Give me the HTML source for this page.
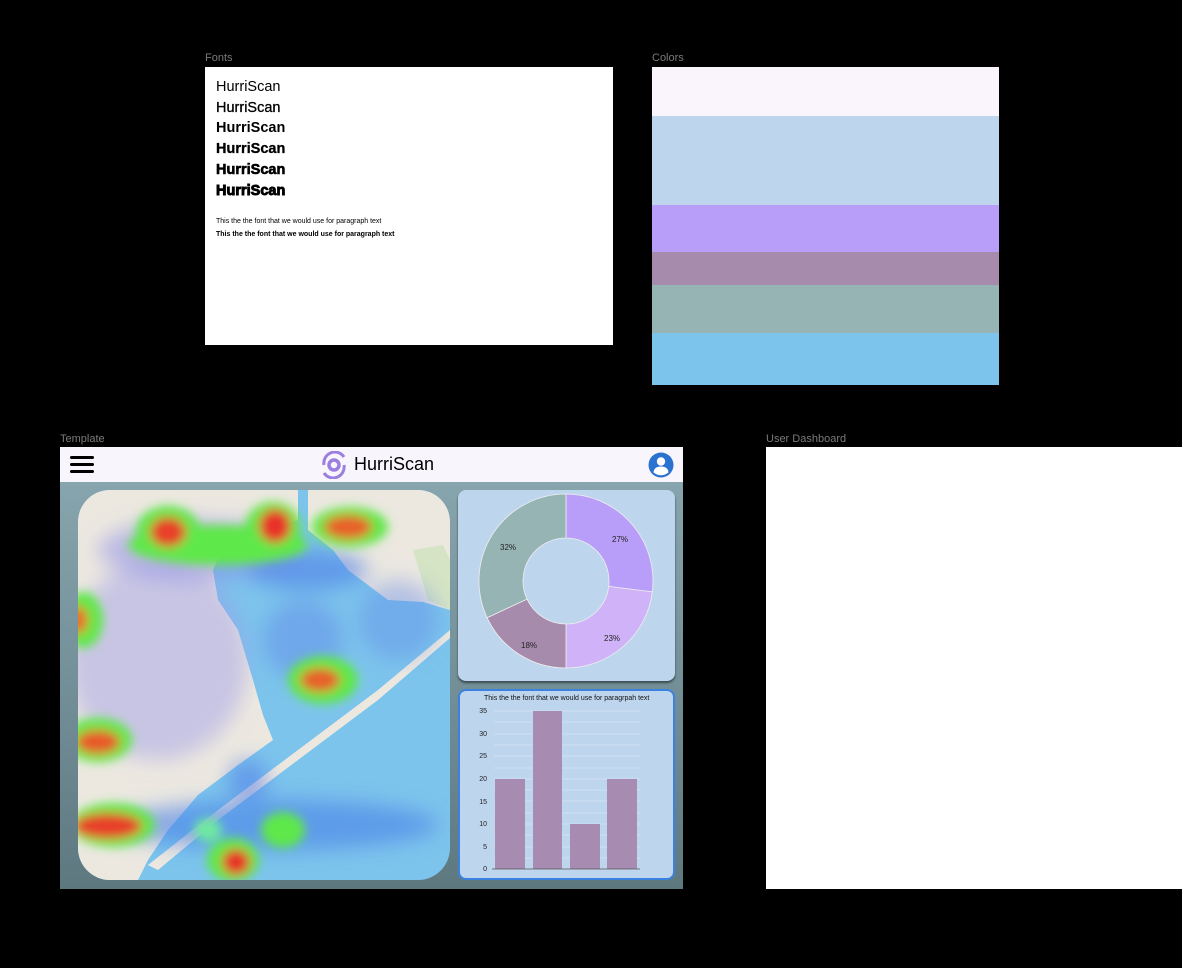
<!DOCTYPE html>
<html><head><style>
body{margin:0;width:1182px;height:968px;background:#000;position:relative;overflow:hidden;font-family:"Liberation Sans",sans-serif}
.lbl{position:absolute;color:#7a7a7a;font-size:11px}
.abs{position:absolute}
</style></head><body>
<div class="lbl" style="left:205px;top:52px">Fonts</div>
<div class="lbl" style="left:652px;top:52px">Colors</div>
<div class="lbl" style="left:60px;top:433px">Template</div>
<div class="lbl" style="left:766px;top:433px">User Dashboard</div>

<div class="abs" style="left:205px;top:67px;width:408px;height:278px;background:#fff">
 <div style="position:absolute;left:11px;top:10px;font-size:14.5px;line-height:20.7px;color:#000">
  <div style="font-weight:400">HurriScan</div>
  <div style="font-weight:400;-webkit-text-stroke:.3px #000">HurriScan</div>
  <div style="font-weight:700">HurriScan</div>
  <div style="font-weight:700;-webkit-text-stroke:.3px #000">HurriScan</div>
  <div style="font-weight:700;-webkit-text-stroke:.6px #000">HurriScan</div>
  <div style="font-weight:700;-webkit-text-stroke:.9px #000">HurriScan</div>
 </div>
 <div style="position:absolute;left:11px;top:148px;font-size:7px;line-height:13px">This the the font that we would use for paragraph text<br><b>This the the font that we would use for paragraph text</b></div>
</div>

<div class="abs" style="left:652px;top:67px;width:347px;height:318px">
 <div style="height:49px;background:#faf5fd"></div>
 <div style="height:89px;background:#bed5ee"></div>
 <div style="height:47px;background:#b89ef8"></div>
 <div style="height:33px;background:#a78bac"></div>
 <div style="height:48px;background:#96b4b4"></div>
 <div style="height:52px;background:#7cc4ec"></div>
</div>

<div class="abs" style="left:766px;top:447px;width:416px;height:442px;background:#fff"></div>

<div class="abs" style="left:60px;top:447px;width:623px;height:442px;background:linear-gradient(#8ba9b2,#5e7880)">
 <div style="height:35px;background:#f9f5fd;position:relative">
  <div style="position:absolute;left:10px;top:9px;width:24px">
   <div style="height:3px;background:#000;border-radius:2px;margin-bottom:4px"></div>
   <div style="height:3px;background:#000;border-radius:2px;margin-bottom:4px"></div>
   <div style="height:3px;background:#000;border-radius:2px"></div>
  </div>
  <svg style="position:absolute;left:260px;top:4px" width="28" height="28" viewBox="0 0 28 28">
   <circle cx="14" cy="14" r="5" fill="none" stroke="#9b7fe0" stroke-width="3.5"/>
   <path d="M4 22 A11 11 0 0 0 24 14" fill="none" stroke="#9b7fe0" stroke-width="3"/>
   <path d="M24 6 A11 11 0 0 0 4 14" fill="none" stroke="#9b7fe0" stroke-width="3"/>
  </svg>
  <div style="position:absolute;left:294px;top:7px;font-size:18px;color:#000">HurriScan</div>
  <svg style="position:absolute;left:588px;top:5px" width="26" height="26" viewBox="0 0 26 26">
   <circle cx="13" cy="13" r="12.5" fill="#2a72d0"/>
   <circle cx="13" cy="9.5" r="4.2" fill="#fff"/>
   <path d="M5.5 20.5 Q6 14.5 13 14.5 Q20 14.5 20.5 20.5 Q13 26 5.5 20.5Z" fill="#fff"/>
  </svg>
 </div>
 <svg style="position:absolute;left:18px;top:43px" width="372" height="390" viewBox="0 0 372 390">
  <defs>
   <clipPath id="c"><rect width="372" height="390" rx="32"/></clipPath>
   <filter id="b"><feGaussianBlur stdDeviation="10"/></filter>
   <filter id="b2"><feGaussianBlur stdDeviation="5"/></filter>
  </defs>
  <g clip-path="url(#c)">
   <rect width="372" height="390" fill="#7cc4ec"/>
   <path d="M0 0H220V30L190 40 150 45 135 80 140 110 160 140 175 190 185 225 195 250 160 275 120 305 90 340 70 370 60 390H0Z" fill="#ece8e0"/>
   <path d="M230 0H372V120L345 112 310 110 270 80 255 60 230 40Z" fill="#ece8e0"/>
   <path d="M70 375 L140 320 L220 260 L300 200 L372 140 L372 148 L300 210 L220 270 L140 330 L80 380Z" fill="#ece8e0"/>
   <path d="M335 60L365 55 372 70 372 120 350 110Z" fill="#d4e4c4"/>
   <g filter="url(#b)">
    <ellipse cx="80" cy="170" rx="90" ry="100" fill="#9b9ae8" opacity=".45"/>
    <ellipse cx="120" cy="60" rx="100" ry="30" fill="#8a8ae8" opacity=".5"/>
    <ellipse cx="230" cy="80" rx="60" ry="20" fill="#4f7ee8" opacity=".6"/>
    <ellipse cx="225" cy="150" rx="40" ry="40" fill="#5f86e8" opacity=".45"/>
    <ellipse cx="320" cy="130" rx="40" ry="40" fill="#5f86e8" opacity=".4"/>
    <ellipse cx="200" cy="335" rx="160" ry="25" fill="#4a80e8" opacity=".6"/>
    <ellipse cx="170" cy="290" rx="20" ry="20" fill="#4a70e8" opacity=".5"/>
   </g>
   <g filter="url(#b2)">
    <ellipse cx="140" cy="55" rx="90" ry="20" fill="#5ee84a"/>
    <ellipse cx="90" cy="42" rx="32" ry="26" fill="#5ee84a"/>
    <ellipse cx="195" cy="38" rx="28" ry="26" fill="#5ee84a"/>
    <ellipse cx="272" cy="37" rx="38" ry="20" fill="#5ee84a"/>
    <ellipse cx="245" cy="190" rx="35" ry="24" fill="#5ee84a"/>
    <ellipse cx="5" cy="130" rx="20" ry="28" fill="#5ee84a"/>
    <ellipse cx="20" cy="250" rx="34" ry="22" fill="#5ee84a"/>
    <ellipse cx="35" cy="335" rx="42" ry="22" fill="#5ee84a"/>
    <ellipse cx="155" cy="370" rx="26" ry="22" fill="#5ee84a"/>
    <ellipse cx="130" cy="340" rx="14" ry="12" fill="#6ee8a0"/>
    <ellipse cx="205" cy="340" rx="22" ry="18" fill="#5ee84a"/>
    <ellipse cx="90" cy="42" rx="18" ry="15" fill="#e8402a"/>
    <ellipse cx="197" cy="36" rx="16" ry="17" fill="#e8322a"/>
    <ellipse cx="270" cy="37" rx="24" ry="12" fill="#e8602a"/>
    <ellipse cx="242" cy="190" rx="20" ry="12" fill="#e8602a"/>
    <ellipse cx="0" cy="130" rx="10" ry="14" fill="#e8702a"/>
    <ellipse cx="20" cy="252" rx="22" ry="12" fill="#e85a2a"/>
    <ellipse cx="30" cy="336" rx="34" ry="13" fill="#e8402a"/>
    <ellipse cx="158" cy="372" rx="14" ry="13" fill="#e8322a"/>
   </g>
  </g>
 </svg>
 <div style="position:absolute;left:398px;top:43px;width:217px;height:191px;background:#bed5ee;border-radius:8px;box-shadow:0 2px 2px #3a4a50">
  <svg width="217" height="191" viewBox="0 0 217 191">
   <g transform="translate(108,91)" stroke="#eee" stroke-width=".8">
    <path d="M0 -87 A87 87 0 0 1 86.3 10.9 L42.7 5.4 A43 43 0 0 0 0 -43Z" fill="#b89ef8"/>
    <path d="M86.3 10.9 A87 87 0 0 1 0 87 L0 43 A43 43 0 0 0 42.7 5.4Z" fill="#d0b2f8"/>
    <path d="M0 87 A87 87 0 0 1 -78.9 36.7 L-39 18.1 A43 43 0 0 0 0 43Z" fill="#a78bac"/>
    <path d="M-78.9 36.7 A87 87 0 0 1 0 -87 L0 -43 A43 43 0 0 0 -39 18.1Z" fill="#96b4b4"/>
   </g>
   <g font-size="8" fill="#222"><text x="154" y="52">27%</text><text x="146" y="151">23%</text><text x="63" y="158">18%</text><text x="42" y="60">32%</text></g>
  </svg>
 </div>
 <div style="position:absolute;left:398px;top:242px;width:213px;height:187px;background:#bed5ee;border:2px solid #3b82e0;border-radius:8px">
  <svg width="213" height="187" viewBox="0 0 213 187" style="position:absolute;left:0;top:0">
   <text x="24" y="9" font-size="7" fill="#111">This the the font that we would use for paragrpah text</text>
   <g stroke="#d6e4f4" stroke-width=".8">
    <line x1="34" x2="180" y1="20" y2="20"/><line x1="34" x2="180" y1="31" y2="31"/><line x1="34" x2="180" y1="43" y2="43"/><line x1="34" x2="180" y1="54" y2="54"/><line x1="34" x2="180" y1="65" y2="65"/><line x1="34" x2="180" y1="77" y2="77"/><line x1="34" x2="180" y1="88" y2="88"/><line x1="34" x2="180" y1="99" y2="99"/><line x1="34" x2="180" y1="110" y2="110"/><line x1="34" x2="180" y1="122" y2="122"/><line x1="34" x2="180" y1="133" y2="133"/><line x1="34" x2="180" y1="144" y2="144"/><line x1="34" x2="180" y1="156" y2="156"/><line x1="34" x2="180" y1="167" y2="167"/>
   </g>
   <g fill="#a78bb0"><rect x="35" y="88" width="30" height="90"/><rect x="73" y="20" width="29" height="158"/><rect x="110" y="133" width="30" height="45"/><rect x="147" y="88" width="30" height="90"/></g>
   <line x1="32" x2="180" y1="178" y2="178" stroke="#555" stroke-width=".8"/>
   <g font-size="7" fill="#222" text-anchor="end"><text x="27" y="22">35</text><text x="27" y="45">30</text><text x="27" y="67">25</text><text x="27" y="90">20</text><text x="27" y="113">15</text><text x="27" y="135">10</text><text x="27" y="158">5</text><text x="27" y="180">0</text></g>
  </svg>
 </div>
</div>
</body></html>
